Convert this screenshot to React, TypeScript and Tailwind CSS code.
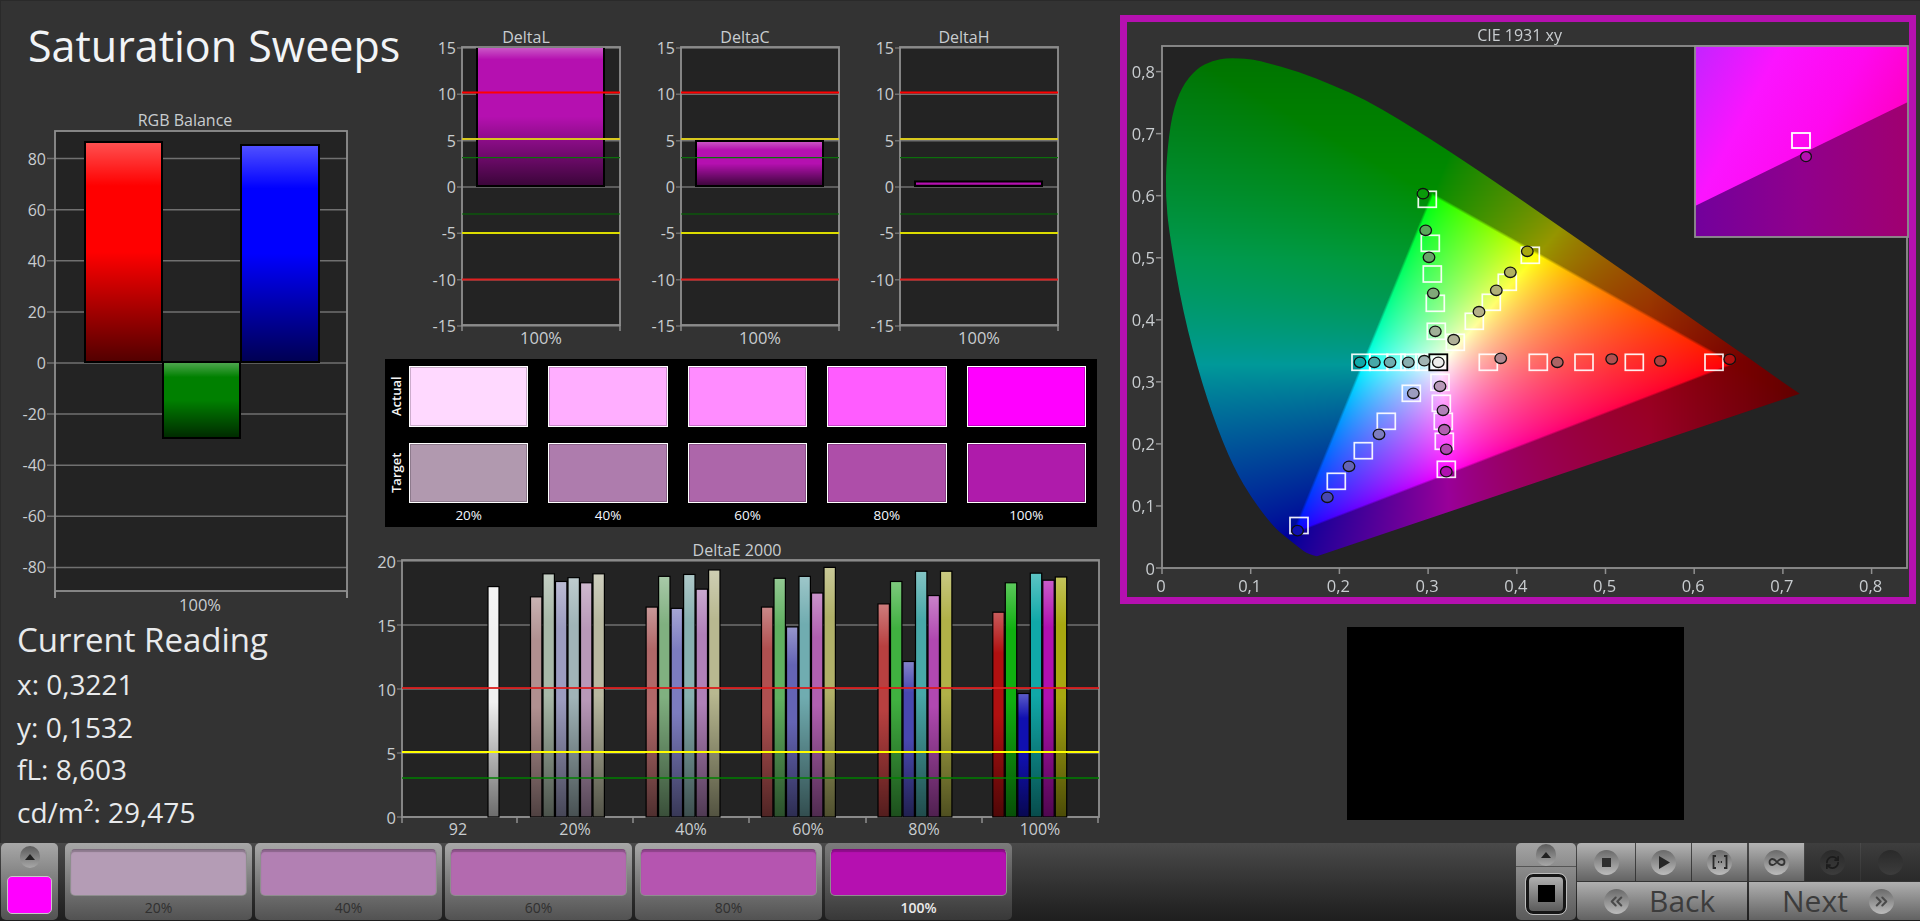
import React, { useEffect, useRef } from 'react';
import { ChevronsLeft, ChevronsRight, Infinity as InfinityIcon, RefreshCw } from 'lucide-react';

const MAGENTA = '#b510b0';

// shared overlay that gives every bar its lit top and dark foot
const Gloss = ({ id, lit = 0.2, foot = 0.68 }: { id: string; lit?: number; foot?: number }) => (
  <defs>
    <linearGradient id={id} x1="0" y1="0" x2="0" y2="1">
      <stop offset="0" stopColor="#fff" stopOpacity="0.32" />
      <stop offset={lit} stopColor="#fff" stopOpacity="0" />
      <stop offset="0.5" stopColor="#000" stopOpacity="0" />
      <stop offset="1" stopColor="#000" stopOpacity={foot} />
    </linearGradient>
  </defs>
);

const Bar = ({ x, y, w, h, fill, gloss, sw = 2 }: { x: number; y: number; w: number; h: number; fill: string; gloss: string; sw?: number }) => (
  <g>
    <rect x={x} y={y} width={w} height={h} fill={fill} />
    <rect x={x} y={y} width={w} height={h} fill={`url(#${gloss})`} stroke="#000" strokeWidth={sw} />
  </g>
);

const LABEL = '#c9cdd0';
const AXIS = '#8f8f8f';
const GRID = '#707070';

const RgbBalance = () => {
  const ticks = [80, 60, 40, 20, 0, -20, -40, -60, -80];
  const yOf = (v: number) => 363 - v * 2.555;
  return (
    <svg width={365} height={502} viewBox="0 110 365 502" className="block">
      <Gloss id="gloss-rgb" />
      <text x={185} y={120} fill={LABEL} fontSize={16} textAnchor="middle" dominantBaseline="central">RGB Balance</text>
      <rect x={55} y={131} width={292} height={460} fill="#232323" />
      {ticks.map(t => (
        <g key={t}>
          <line x1={47} x2={347} y1={yOf(t)} y2={yOf(t)} stroke={GRID} strokeWidth={1.5} />
          <text x={46} y={yOf(t)} fill={LABEL} fontSize={16} textAnchor="end" dominantBaseline="central">{t}</text>
        </g>
      ))}
      <rect x={55} y={131} width={292} height={460} fill="none" stroke={AXIS} strokeWidth={1.8} />
      <line x1={55} x2={55} y1={591} y2={598} stroke={AXIS} strokeWidth={2} />
      <line x1={347} x2={347} y1={591} y2={598} stroke={AXIS} strokeWidth={2} />
      <Bar x={85} y={142} w={77} h={220} fill="#ff0000" gloss="gloss-rgb" />
      <Bar x={163} y={362} w={77} h={76} fill="#008000" gloss="gloss-rgb" />
      <Bar x={241} y={145} w={78} h={217} fill="#0000ff" gloss="gloss-rgb" />
      <text x={200} y={604} fill={LABEL} fontSize={16.5} textAnchor="middle" dominantBaseline="central">100%</text>
    </svg>
  );
};

const DeltaChart = ({ title, barTop, lit }: { title: string; barTop: number; lit?: number }) => {
  const ticks = [15, 10, 5, 0, -5, -10, -15];
  const yOf = (v: number) => 187 - v * 9.27;
  const gloss = `gloss-${title}`;
  return (
    <svg width={219} height={325} viewBox="400 25 219 325" className="block shrink-0 overflow-visible">
      <Gloss id={gloss} lit={lit} />
      <text x={526} y={37} fill={LABEL} fontSize={16} textAnchor="middle" dominantBaseline="central">{title}</text>
      <rect x={462} y={47} width={158} height={278} fill="#232323" />
      {ticks.map(t => (
        <g key={t}>
          <line x1={457} x2={620} y1={yOf(t)} y2={yOf(t)} stroke={GRID} strokeWidth={1.5} />
          <text x={456} y={yOf(t)} fill={LABEL} fontSize={16} textAnchor="end" dominantBaseline="central">{t}</text>
        </g>
      ))}
      <Bar x={477} y={barTop} w={127} h={186 - barTop} fill={MAGENTA} gloss={gloss} />
      <rect x={462} y={47} width={158} height={278} fill="none" stroke={AXIS} strokeWidth={1.8} />
      <line x1={462} x2={620} y1={92.5} y2={92.5} stroke="#ff0000" strokeWidth={1.8} />
      <line x1={462} x2={620} y1={139} y2={139} stroke="#d8c81e" strokeWidth={2} />
      <line x1={462} x2={620} y1={157.7} y2={157.7} stroke="#0c6e0c" strokeWidth={1.2} />
      <line x1={462} x2={620} y1={214} y2={214} stroke="#007000" strokeWidth={1.2} />
      <line x1={462} x2={620} y1={233} y2={233} stroke="#dcdc00" strokeWidth={2} />
      <line x1={462} x2={620} y1={279.5} y2={279.5} stroke="#e02020" strokeWidth={1.8} />
      <line x1={462} x2={462} y1={325} y2={331} stroke={AXIS} strokeWidth={1.5} />
      <line x1={620} x2={620} y1={325} y2={331} stroke={AXIS} strokeWidth={1.5} />
      <text x={541} y={337} fill={LABEL} fontSize={16.5} textAnchor="middle" dominantBaseline="central">100%</text>
    </svg>
  );
};

const deltaGroups = [
  { x: 530, colors: ['#b09090', '#a8b8a8', '#9c9cc0', '#a0b4b8', '#b898b8', '#b8b8a0'], values: [17.2, 19.0, 18.4, 18.7, 18.3, 19.0] },
  { x: 645.6, colors: ['#b06868', '#80b080', '#7c7cc0', '#88b0b0', '#b080b8', '#b8b890'], values: [16.4, 18.8, 16.3, 18.95, 17.8, 19.3] },
  { x: 761, colors: ['#b05050', '#60b060', '#6464b4', '#70acb0', '#b060b0', '#b0b068'], values: [16.4, 18.65, 14.85, 18.8, 17.5, 19.5] },
  { x: 877.5, colors: ['#b84040', '#40b040', '#4848b0', '#48a8a8', '#b048b0', '#b0b048'], values: [16.65, 18.4, 12.15, 19.2, 17.3, 19.2] },
  { x: 992.3, colors: ['#b01010', '#10b010', '#1010b0', '#10a8a8', '#b010b0', '#a8a810'], values: [16, 18.3, 9.65, 19.05, 18.5, 18.75] },
];

const DeltaE = () => {
  const yOf = (v: number) => 817 - v * 12.8;
  const xLabels: [string, number][] = [['92', 458], ['20%', 575], ['40%', 691], ['60%', 808], ['80%', 924], ['100%', 1040]];
  return (
    <svg width={740} height={305} viewBox="365 535 740 305" className="block">
      <Gloss id="gloss-de" foot={0.55} />
      <text x={737} y={550} fill={LABEL} fontSize={16} textAnchor="middle" dominantBaseline="central">DeltaE 2000</text>
      <rect x={402} y={560} width={697} height={257} fill="#232323" />
      {[20, 15, 10, 5, 0].map(t => (
        <g key={t}>
          <line x1={397} x2={1099} y1={yOf(t)} y2={yOf(t)} stroke={GRID} strokeWidth={1.5} />
          <text x={396} y={yOf(t)} fill={LABEL} fontSize={16.5} textAnchor="end" dominantBaseline="central">{t}</text>
        </g>
      ))}
      <rect x={402} y={560} width={697} height={257} fill="none" stroke={AXIS} strokeWidth={1.8} />
      <Bar x={488} y={yOf(18)} w={11} h={18 * 12.8} fill="#f0f0f0" gloss="gloss-de" sw={1.2} />
      {deltaGroups.map(g =>
        g.values.map((v, i) => (
          <Bar key={`${g.x}-${i}`} x={g.x + i * 12.5 + 0.5} y={yOf(v)} w={11.4} h={v * 12.8} fill={g.colors[i]} gloss="gloss-de" sw={1.2} />
        ))
      )}
      <line x1={402} x2={1099} y1={688} y2={688} stroke="#dc1e1e" strokeWidth={2} strokeOpacity={0.9} />
      <line x1={402} x2={1099} y1={752} y2={752} stroke="#ffff00" strokeWidth={2} />
      <line x1={402} x2={1099} y1={778} y2={778} stroke="#008000" strokeWidth={1.5} />
      {[402, 517, 633, 749, 866, 982, 1098].map(x => (
        <line key={x} x1={x} x2={x} y1={817} y2={823} stroke={AXIS} strokeWidth={1.5} />
      ))}
      {xLabels.map(([t, x]) => (
        <text key={t} x={x} y={829} fill={LABEL} fontSize={16} textAnchor="middle" dominantBaseline="central">{t}</text>
      ))}
    </svg>
  );
};

const actual = ['#ffd9ff', '#ffaeff', '#ff8cff', '#ff5cff', '#ff00ff'];
const target = ['#b199af', '#ae7cad', '#ad66aa', '#ae4ea9', '#af1bab'];
const steps = ['20%', '40%', '60%', '80%', '100%'];

const SwatchPanel = () => (
  <div className="ml-[20px] mt-[9px] flex h-[168px] w-[712px] bg-black pt-[7px]">
    <div className="flex w-[24px] flex-col items-center text-[13px] font-semibold text-[#f4f4f4]">
      <div className="flex h-[61px] items-center justify-center [writing-mode:vertical-rl] rotate-180">Actual</div>
      <div className="mt-[16px] flex h-[60px] items-center justify-center [writing-mode:vertical-rl] rotate-180">Target</div>
    </div>
    <div className="grid w-[677px] grid-cols-5 grid-rows-[61px_60px_24px] gap-x-[20px] gap-y-0">
      {actual.map(c => (
        <div key={c} className="border border-white shadow-[inset_0_0_0_1px_rgba(0,0,0,0.2)]" style={{ background: c }} />
      ))}
      {target.map((c, i) => (
        <div key={c} className="mt-[16px] h-[60px] border border-white shadow-[inset_0_0_0_1px_rgba(0,0,0,0.2)]" style={{ background: c, gridRow: 2, gridColumn: i + 1 }} />
      ))}
      {steps.map((s, i) => (
        <div key={s} className="mt-[16px] text-center text-[13.5px] font-medium leading-[24px] text-[#f4f8ff]" style={{ gridRow: 3, gridColumn: i + 1 }}>{s}</div>
      ))}
    </div>
  </div>
);

// chromaticity points of the spectral locus, trimmed to how the app draws it
const LOCUS: [number, number][] = [
  [0.1747, 0.019], [0.165, 0.022], [0.155, 0.032], [0.144, 0.045], [0.1241, 0.0678], [0.0913, 0.1327], [0.0687, 0.2007],
  [0.0454, 0.295], [0.0235, 0.4127], [0.0082, 0.5384], [0.004, 0.6], [0.005, 0.66], [0.0109, 0.73], [0.022, 0.775],
  [0.0389, 0.805], [0.057, 0.818], [0.0743, 0.822], [0.1, 0.82], [0.1142, 0.816], [0.1547, 0.8], [0.1929, 0.778],
  [0.2296, 0.7543], [0.2658, 0.7243], [0.3016, 0.6923], [0.3373, 0.6589], [0.3731, 0.6245], [0.4087, 0.5896], [0.4441, 0.5547],
  [0.4788, 0.5202], [0.5125, 0.4866], [0.5448, 0.4544], [0.5752, 0.4242], [0.6029, 0.3965], [0.627, 0.3725], [0.6482, 0.3514],
  [0.6658, 0.334], [0.6801, 0.3197], [0.7, 0.2993], [0.719, 0.281],
];

const PX = 887;
const PY = 620.5;
const PLOT_W = 745;
const PLOT_H = 522;

const gamutColor = (x: number, y: number): [number, number, number] => {
  // barycentric weights in the Rec.709 triangle
  const dx = x - 0.15;
  const dy = y - 0.06;
  const det = 0.49 * 0.54 - 0.155 * 0.27;
  const r = (dx * 0.54 - 0.155 * dy) / det;
  const g = (0.49 * dy - 0.27 * dx) / det;
  const b = 1 - r - g;
  const rl = Math.max(r, 0) / 0.644;
  const gl = Math.max(g, 0) / 1.192;
  const bl = Math.max(b, 0) / 1.203;
  const m = Math.max(rl, gl, bl, 0.0001);
  let dim = 0.6;
  if (y > 0.5) dim -= (y - 0.5) * 0.45;
  if (x > 0.55) dim -= Math.min(1, (x - 0.55) / 0.17) * 0.22;
  const t = Math.min(1, Math.max(0, -Math.min(r, g, b) / 0.008));
  const f = 1 + (dim - 1) * t;
  const enc = (v: number) => Math.pow(v / m, 0.75) * 255 * f;
  return [enc(rl), enc(gl), enc(bl)];
};

const GamutCanvas = () => {
  const ref = useRef<HTMLCanvasElement>(null);

  useEffect(() => {
    const ctx = ref.current?.getContext('2d');
    if (!ctx) return;
    const off = document.createElement('canvas');
    off.width = PLOT_W;
    off.height = PLOT_H;
    const offCtx = off.getContext('2d')!;
    const img = offCtx.createImageData(PLOT_W, PLOT_H);
    for (let py = 0; py < PLOT_H; py++) {
      for (let px = 0; px < PLOT_W; px++) {
        const [r, g, b] = gamutColor(px / PX, (PLOT_H - py) / PY);
        const i = (py * PLOT_W + px) * 4;
        img.data[i] = r;
        img.data[i + 1] = g;
        img.data[i + 2] = b;
        img.data[i + 3] = 255;
      }
    }
    offCtx.putImageData(img, 0, 0);
    // round the locus off between its points, the tip stays sharp
    const pts = LOCUS.map(([x, y]) => [x * PX, PLOT_H - y * PY]);
    ctx.beginPath();
    ctx.moveTo(pts[0][0], pts[0][1]);
    for (let i = 1; i < pts.length - 1; i++) {
      ctx.quadraticCurveTo(pts[i][0], pts[i][1], (pts[i][0] + pts[i + 1][0]) / 2, (pts[i][1] + pts[i + 1][1]) / 2);
    }
    ctx.lineTo(pts[pts.length - 1][0], pts[pts.length - 1][1]);
    ctx.closePath();
    ctx.clip();
    ctx.drawImage(off, 0, 0);
  }, []);

  return <canvas ref={ref} width={PLOT_W} height={PLOT_H} className="absolute left-[35px] top-[24px]" />;
};

const squares: [number, number][] = [
  [1427.3, 199.3], [1430.3, 243.3], [1432.3, 274], [1435.3, 303.3], [1436.3, 331.3],
  [1530.3, 255.3], [1507.3, 282.3], [1491.3, 302.3], [1474.3, 321.3], [1455.3, 342.3],
  [1488.3, 362.3], [1538.3, 362.3], [1584, 362.3], [1634.3, 362.3], [1714, 362.3],
  [1361, 362.3], [1378.7, 362.3], [1396, 362.3], [1410, 362.3], [1425, 362.3],
  [1411.3, 393.3], [1386.3, 421.3], [1363.3, 450.7], [1336.3, 481.3], [1299, 525.5],
  [1440, 382.3], [1441.3, 403.3], [1443.3, 421.3], [1444.3, 441.3], [1446.3, 469.3],
];

const dots: [number, number, string][] = [
  [1423, 193.7, '#0a9a0a'], [1425.7, 230.3, '#5aa85a'], [1429, 257.3, '#68a468'], [1433.3, 293.3, '#80a878'], [1435.3, 331.3, '#a0b098'],
  [1527.3, 251.3, '#a8a810'], [1510.3, 272.3, '#b0b060'], [1496.3, 290.3, '#b0b078'], [1479, 311.7, '#b4b088'], [1453.7, 339.7, '#b0b098'],
  [1500.7, 358.3, '#b08890'], [1557.3, 362.3, '#ac6464'], [1611.7, 359, '#b05050'], [1660.3, 361, '#b04040'], [1729.7, 359.3, '#b01010'],
  [1360, 362.3, '#10a8a8'], [1374.3, 362.3, '#48a8a8'], [1390, 362.3, '#70acb0'], [1408.3, 362.3, '#88b0b0'], [1424.3, 360.7, '#a0b4b4'],
  [1413.3, 393.3, '#9c9cc0'], [1379, 434.3, '#7c7cc0'], [1349, 466.3, '#6464b4'], [1327.3, 497.3, '#4848b0'], [1297.5, 530.6, '#1010b0'],
  [1440, 386.3, '#b898b8'], [1443, 410.3, '#b080b8'], [1444.3, 429.7, '#b060b0'], [1446.3, 449.3, '#b048b0'], [1446.3, 471.7, '#b010b0'],
];

const CieChart = () => {
  const xOf = (v: number) => 1162 + PX * v;
  const yOf = (v: number) => 568 - PY * v;
  const xTicks = [0, 1, 2, 3, 4, 5, 6, 7, 8];
  const fmt = (t: number) => (t === 0 ? '0' : `0,${t}`);
  return (
    <div className="relative h-[575px] w-[782px]">
      <div className="absolute left-[35px] top-[24px] h-[522px] w-[745px] bg-[#232323]" />
      <GamutCanvas />
      <svg width={782} height={575} viewBox="1127 22 782 575" className="absolute inset-0">
        <defs>
          <linearGradient id="inset-top" x1="0" y1="0" x2="1" y2="0.4">
            <stop offset="0" stopColor="#c324ff" />
            <stop offset="0.35" stopColor="#fb14ff" />
            <stop offset="0.7" stopColor="#ff08ee" />
            <stop offset="1" stopColor="#ff00c4" />
          </linearGradient>
          <linearGradient id="inset-bottom" x1="0" y1="0" x2="1" y2="0">
            <stop offset="0" stopColor="#72009c" />
            <stop offset="0.5" stopColor="#90008c" />
            <stop offset="1" stopColor="#a00070" />
          </linearGradient>
        </defs>
        <text x={1519.6} y={35} fill={LABEL} fontSize={16} textAnchor="middle" dominantBaseline="central">CIE 1931 xy</text>
        <rect x={1162} y={46} width={745} height={522} fill="none" stroke={AXIS} strokeWidth={1.8} />
        {xTicks.map(t => (
          <g key={t}>
            <line x1={xOf(t / 10)} x2={xOf(t / 10)} y1={568} y2={574} stroke={AXIS} strokeWidth={1.5} />
            <text x={xOf(t / 10) - 1} y={585} fill={LABEL} fontSize={16.5} textAnchor="middle" dominantBaseline="central">{fmt(t)}</text>
            <line x1={1156} x2={1162} y1={yOf(t / 10)} y2={yOf(t / 10)} stroke={AXIS} strokeWidth={1.5} />
            <text x={1155} y={yOf(t / 10)} fill={LABEL} fontSize={16.5} textAnchor="end" dominantBaseline="central">{fmt(t)}</text>
          </g>
        ))}
        {squares.map(([x, y]) => (
          <rect key={`${x}-${y}`} x={x - 9} y={y - 8} width={18} height={16} fill="none" stroke="#fff" strokeOpacity={0.92} strokeWidth={1.7} />
        ))}
        <rect x={1429.3} y={354.3} width={18} height={16} fill="#ffffff" fillOpacity={0.5} stroke="#000" strokeWidth={1.8} />
        {dots.map(([x, y, c]) => (
          <ellipse key={`${x}-${y}`} cx={x} cy={y} rx={5.8} ry={5.2} fill={c} stroke="#111" strokeWidth={1.3} />
        ))}
        <ellipse cx={1438.3} cy={362.3} rx={5.8} ry={5.2} fill="#ececec" stroke="#111" strokeWidth={1.3} />

        {/* zoomed corner */}
        <rect x={1695} y={46} width={213} height={191} fill="url(#inset-bottom)" />
        <polygon points="1695,46 1908,46 1908,102 1695,206" fill="url(#inset-top)" />
        <rect x={1695} y={46} width={213} height={191} fill="none" stroke={AXIS} strokeWidth={1.8} />
        <rect x={1792} y={133} width={18} height={15} fill="none" stroke="#fff" strokeWidth={1.8} />
        <ellipse cx={1806} cy={156.6} rx={5.4} ry={5} fill={MAGENTA} stroke="#111" strokeWidth={1.3} />
      </svg>
    </div>
  );
};

const UpKnob = () => (
  <span className="flex h-[22px] w-[20px] items-center justify-center rounded-full bg-linear-to-b from-[#5c5c5c] to-[#a8a8a8]">
    <svg width="10" height="6" viewBox="0 0 10 6"><polygon points="5,0 10,6 0,6" fill="#222" /></svg>
  </span>
);

const tiles = [
  { label: '20%', color: '#b49cb5' },
  { label: '40%', color: '#b280b3' },
  { label: '60%', color: '#b36aaf' },
  { label: '80%', color: '#b555b0' },
  { label: '100%', color: MAGENTA, active: true },
];

const Tile = ({ label, color, active }: { label: string; color: string; active?: boolean }) => (
  <div className={`flex w-[187px] flex-col rounded-[5px] bg-linear-to-b px-[5px] pt-[6px] ${active ? 'from-[#7c7c7c] to-[#383838]' : 'from-[#a8a8a8] to-[#525252]'}`}>
    <div
      className="h-[47px] rounded-[5px] border border-[#8e8e8e] border-t-[rgba(0,0,0,0.3)] shadow-[inset_0_2px_1px_rgba(0,0,0,0.22)]"
      style={{ background: color }}
    />
    <div className={`pt-[3px] text-center text-[14px] leading-[18px] ${active ? 'font-semibold text-[#ececec]' : 'text-[#303030]'}`}>{label}</div>
  </div>
);

const Knob = ({ children, dark }: { children?: React.ReactNode; dark?: boolean }) => (
  <span className={`flex h-[25px] w-[25px] items-center justify-center rounded-full bg-linear-to-b ${dark ? 'from-[#2a2a2a] to-[#3c3c3c]' : 'from-[#6a6a6a] to-[#bcbcbc]'}`}>
    {children}
  </span>
);

const TopButton = ({ w, dark, children }: { w: string; dark?: boolean; children?: React.ReactNode }) => (
  <div className={`flex h-full items-center justify-center bg-linear-to-b ${w} ${dark ? 'from-[#3e3e3e] to-[#2a2a2a]' : 'from-[#b4b4b4] to-[#646464]'}`}>
    <Knob dark={dark}>{children}</Knob>
  </div>
);

const Controls = () => (
  <div className="ml-auto flex">
    <div className="flex w-[60px] flex-col rounded-[5px] bg-linear-to-b from-[#a4a4a4] to-[#5a5a5a]">
      <div className="flex h-[24px] items-center justify-center border-b border-[#555]">
        <UpKnob />
      </div>
      <div className="flex flex-1 items-center justify-center">
        <div className="flex h-[40px] w-[40px] items-center justify-center rounded-[7px] border-[3px] border-[#161616] bg-linear-to-b from-[#b0b0b0] to-[#5c5c5c] outline outline-[#bdbdbd]">
          <div className="h-[17px] w-[17px] bg-black" />
        </div>
      </div>
    </div>
    <div className="ml-px flex w-[343px] flex-col">
      <div className="flex h-[38px] gap-px">
        <TopButton w="w-[58px] rounded-tl-[4px]"><span className="h-[9px] w-[9px] bg-[#2e2e2e]" /></TopButton>
        <TopButton w="w-[55px]">
          <svg width="12" height="13" viewBox="0 0 12 13"><polygon points="1,0 12,6.5 1,13" fill="#262626" /></svg>
        </TopButton>
        <TopButton w="w-[55px] mr-px">
          <svg width="16" height="14" viewBox="0 0 16 14" fill="none" stroke="#2a2a2a" strokeWidth="1.8">
            <path d="M4 1H1.5v12H4M12 1h2.5v12H12" />
            <path d="M6 7h1.2M8.8 7H10" strokeWidth="2" />
          </svg>
        </TopButton>
        <TopButton w="w-[55px]"><InfinityIcon size={18} color="#333" strokeWidth={2.4} /></TopButton>
        <TopButton w="w-[55px]" dark><RefreshCw size={15} color="#1c1c1c" strokeWidth={2.8} /></TopButton>
        <TopButton w="w-[59px]" dark />
      </div>
      <div className="mt-px flex h-[38px] gap-[2px]">
        <div className="flex w-[170px] items-center rounded-bl-[4px] bg-linear-to-b from-[#b0b0b0] to-[#626262] pl-[27px] text-[#3c3c3c]">
          <Knob><ChevronsLeft size={19} color="#4a4a4a" strokeWidth={2.6} /></Knob>
          <span className="ml-[20px] text-[30px] font-medium leading-none">Back</span>
        </div>
        <div className="flex w-[171px] items-center bg-linear-to-b from-[#b0b0b0] to-[#626262] pl-[33px] text-[#3c3c3c]">
          <span className="text-[30px] font-medium leading-none">Next</span>
          <span className="ml-[21px]"><Knob><ChevronsRight size={19} color="#4a4a4a" strokeWidth={2.6} /></Knob></span>
        </div>
      </div>
    </div>
  </div>
);

export default function App() {
  return (
    <div className="flex h-[921px] w-[1920px] flex-col overflow-hidden bg-[#333333] font-['Open_Sans',sans-serif] shadow-[inset_1px_1px_0_#2a2a2a]">
      <div className="flex h-[843px]">
        {/* left column */}
        <div className="w-[365px] shrink-0">
          <h1 className="whitespace-nowrap pl-[28px] pt-[22px] text-[43px] font-normal leading-[48px] text-[#f2f4f6]">Saturation Sweeps</h1>
          <div className="mt-[40px]">
            <RgbBalance />
          </div>
          <div className="pl-[17px] pt-[8px] text-[#e8eaec]">
            <div className="text-[33px] leading-[40px]">Current Reading</div>
            <div className="mt-[3px] text-[28px] leading-[42.5px]">x: 0,3221</div>
            <div className="text-[28px] leading-[42.5px]">y: 0,1532</div>
            <div className="text-[28px] leading-[42.5px]">fL: 8,603</div>
            <div className="text-[28px] leading-[42.5px]">cd/m²: 29,475</div>
          </div>
        </div>

        {/* center column */}
        <div className="w-[750px] shrink-0 pt-[25px]">
          <div className="ml-[35px] flex">
            <DeltaChart title="DeltaL" barTop={47} lit={0.09} />
            <DeltaChart title="DeltaC" barTop={141} />
            <DeltaChart title="DeltaH" barTop={181.5} />
          </div>
          <SwatchPanel />
          <div className="mt-[8px]">
            <DeltaE />
          </div>
        </div>

        {/* right column */}
        <div className="flex-1 pt-[15px]">
          <div className="ml-[5px] w-[796px] border-[7px] border-[#b510b0]">
            <CieChart />
          </div>
          <div className="ml-[232px] mt-[23px] h-[193px] w-[337px] bg-black" />
        </div>
      </div>

      {/* bottom strip */}
      <div className="flex h-[78px] bg-linear-to-b from-[#4a4a4a] to-[#1e1e1e] pb-px">
        <div className="ml-px flex w-[57px] flex-col items-center rounded-[5px] bg-linear-to-b from-[#a8a8a8] to-[#525252] pt-[3px]">
          <UpKnob />
          <div className="mt-[8px] h-[38px] w-[45px] rounded-[5px] border border-[#c8c8c8] bg-[#ff00ff]" />
        </div>
        <div className="ml-[7px] flex gap-[3px]">
          {tiles.map(t => (
            <Tile key={t.label} {...t} />
          ))}
        </div>
        <Controls />
      </div>
    </div>
  );
}
